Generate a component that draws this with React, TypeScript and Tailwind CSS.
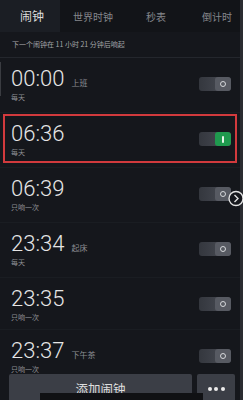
const cjk = { fontFamily: '"Noto Sans CJK SC", "Noto Sans", sans-serif' };

const alarms = [
  { time: '00:00', label: '上班', repeat: '每天', on: false },
  { time: '06:36', label: '', repeat: '每天', on: true, marked: true },
  { time: '06:39', label: '', repeat: '只响一次', on: false },
  { time: '23:34', label: '起床', repeat: '每天', on: false },
  { time: '23:35', label: '', repeat: '只响一次', on: false },
  { time: '23:37', label: '下午茶', repeat: '只响一次', on: false },
];

const Toggle = ({ on }: { on: boolean }) => (
  <div className="w-[32px] h-[14px] rounded-[3px] bg-gradient-to-r from-[#34373e] to-[#4b4e56] flex justify-end overflow-hidden mt-[9px] shrink-0">
    {on ? (
      <div className="w-[16px] h-full bg-[#1f9a4e] rounded-[3px] flex items-center justify-center">
        <div className="w-[2px] h-[7px] bg-[#e8f5ea] rounded-full" />
      </div>
    ) : (
      <div className="w-[16px] h-full bg-[#575a62] rounded-[3px] flex items-center justify-center">
        <div className="w-[6px] h-[6px] rounded-full border-[1.5px] border-[#d6d7da]" />
      </div>
    )}
  </div>
);

const App = () => {
  return (
    <div className="relative w-[243px] h-[400px] overflow-hidden bg-[#15171c] flex flex-col" style={cjk}>
      {/* Tabs */}
      <div className="h-[32px] shrink-0 flex items-center bg-[#121418]">
        <div className="w-[60px] h-full bg-[#1b1e24] flex items-center pl-[20px] text-[12px] text-[#dcdcdc]">闹钟</div>
        <div className="flex-1 flex items-center text-[10px] text-[#85878c]">
          <span className="ml-[13px]">世界时钟</span>
          <span className="ml-[33px]">秒表</span>
          <span className="ml-[36px]">倒计时</span>
        </div>
      </div>

      <div className="h-[26px] shrink-0 flex items-center pl-[12px] text-[7px] text-[#a3a4a8] border-b border-[#24272d]">
        下一个闹钟在 11 小时 21 分钟后响起
      </div>

      {/* Alarm list */}
      <div className="flex-1 min-h-0 overflow-hidden">
        {alarms.map((a, i) => (
          <div
            key={a.time}
            className={`relative flex justify-between items-start pl-[11px] pr-[12px] pt-[10px] border-b border-[#1a1d22] ${i === 4 ? 'h-[52px]' : 'h-[55px]'}`}
          >
            <div className="flex flex-col">
              <div className="flex items-baseline gap-[7px]">
                <span className="text-[22px] leading-[22px] font-light text-[#e6e6e6]" style={{ fontFamily: 'Roboto, "Liberation Sans", sans-serif' }}>
                  {a.time}
                </span>
                {a.label && <span className="text-[8px] text-[#8d8f94]">{a.label}</span>}
              </div>
              <span className="mt-[2px] text-[7px] leading-[10px] text-[#8d8f94]">{a.repeat}</span>
            </div>
            <Toggle on={a.on} />
            {a.marked && (
              <div className="absolute left-[3px] top-[1px] w-[234px] h-[49px] border-2 border-[#d23a3d]" />
            )}
          </div>
        ))}
      </div>

      {/* Footer */}
      <div className="h-[26px] shrink-0 flex gap-[5px] pl-[9px] pr-[8px] overflow-visible">
        <div className="w-[183px] h-[30px] shrink-0 bg-[#3b3e46] rounded-t-[2px] flex justify-center pt-[6px] text-[12.5px] text-[#dedede]">
          添加闹钟
        </div>
        <div className="flex-1 h-[30px] bg-[#3b3e46] rounded-t-[2px] flex justify-center gap-[2.5px] pt-[13px]">
          <span className="w-[4px] h-[4px] rounded-full bg-[#ececec]" />
          <span className="w-[4px] h-[4px] rounded-full bg-[#ececec]" />
          <span className="w-[4px] h-[4px] rounded-full bg-[#ececec]" />
        </div>
      </div>

      {/* overlays */}
      <div className="absolute left-[40px] bottom-0 w-[163px] h-[7px] bg-[#101114]" />
      <div className="absolute right-0 top-0 w-[3px] h-full bg-[#2a2c31]" />
      <div className="absolute left-0 top-[62px] w-[1px] h-[34px] bg-[#3a3c41]" />
      <svg className="absolute left-[228px] top-[190px]" width="16" height="17" viewBox="0 0 16 17">
        <circle cx="8" cy="8.5" r="7" fill="#15171c" stroke="#e2e2e2" strokeWidth="1.4" />
        <path d="M6.5 5 L10 8.5 L6.5 12" fill="none" stroke="#e2e2e2" strokeWidth="1.4" />
      </svg>
    </div>
  );
};

export default App;
